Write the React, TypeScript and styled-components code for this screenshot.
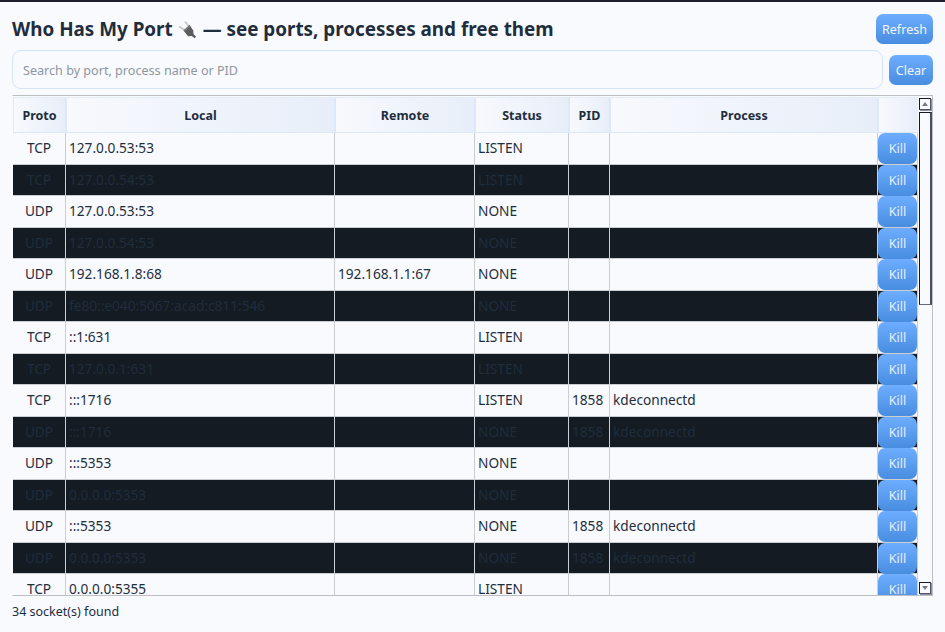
import React from "react";
import styled, { createGlobalStyle } from "styled-components";

const GlobalStyle = createGlobalStyle`
  *, *::before, *::after { box-sizing: border-box; }
  body {
    margin: 0;
    overflow: hidden;
    background: #f8fafe;
    color: #1f2d3d;
    font-family: "Noto Sans", sans-serif;
  }
`;

const COLUMNS = "53px 269px 140px 94px 41px 268px 40px";

const Window = styled.main`
  height: 632px;
  padding: 12px 12px 0;
  border-top: 2px solid #1d1e2e;
  display: flex;
  flex-direction: column;
`;

const TitleBar = styled.header`
  height: 30px;
  display: flex;
  align-items: center;
  justify-content: space-between;
`;

const Title = styled.h1`
  margin: 0;
  display: flex;
  align-items: center;
  font-size: 18.85px;
  line-height: 30px;
  font-weight: 700;
  white-space: pre;
`;

const PlugIcon = styled.svg`
  width: 20px;
  height: 20px;
  margin: 2px 6px 0 4px;
`;

const Button = styled.button<{ $width: number }>`
  width: ${(p) => p.$width}px;
  height: 30px;
  flex: none;
  padding: 0;
  border: 0;
  border-radius: 7px;
  background: linear-gradient(#6eadff, #488de0);
  color: #f1f6fe;
  font: 12.6px/31px "Noto Sans", sans-serif;
`;

const KillButton = styled(Button)`
  height: 31px;
  line-height: 31px;
  color: #e6effc;
`;

const SearchRow = styled.div`
  height: 39px;
  margin-top: 6px;
  display: flex;
  align-items: center;
  gap: 6px;
`;

const SearchInput = styled.input`
  flex: 1;
  height: 39px;
  padding: 1px 10px 0;
  border: 1px solid #d6e4fa;
  border-radius: 9px;
  background: #f8fafe;
  color: #1f2d3d;
  font: 12.6px "Noto Sans", sans-serif;
  outline: 0;
  &::placeholder { color: #8f969e; opacity: 1; }
`;

const TableFrame = styled.section`
  width: 921px;
  height: 501px;
  margin-top: 6px;
  padding-top: 1px;
  border: 1px solid #bcbfc5;
  border-left-color: #f8fafe;
  display: flex;
  overflow: hidden;
`;

const Table = styled.div`
  width: 905px;
`;

const HeaderRow = styled.div`
  display: grid;
  grid-template-columns: 54px 269px 140px 94px 41px 268px 39px;
  height: 36px;
  border-top: 1px solid #e3ecf9;
  border-bottom: 1px solid #dce7f8;
`;

const HeaderCell = styled.div`
  display: flex;
  align-items: center;
  justify-content: center;
  border-right: 2px solid #dde8f8;
  background: linear-gradient(90deg, #f7f9fd, #e8eef9);
  font-size: 12.5px;
  font-weight: 700;
  &:first-child { border-left: 1px solid #e0e9f8; }
  &:last-child { border-right: 0; }
`;

const Row = styled.div<{ $dark: boolean }>`
  display: grid;
  grid-template-columns: ${COLUMNS};
  height: ${(p) => (p.$dark ? 31 : 32)}px;
  border-bottom: 1px solid #cacdd2;
  background: ${(p) => (p.$dark ? "#141b22" : "#f8fafe")};
`;

const Cell = styled.div<{ $center?: boolean }>`
  border-right: 1px solid #cacdd2;
  padding: ${(p) => (p.$center ? "0" : "0 3px")};
  text-align: ${(p) => (p.$center ? "center" : "left")};
  font-size: 13.67px;
  line-height: 30px;
  white-space: nowrap;
`;

const ActionCell = styled.div`
  display: flex;
  border-right: 1px solid #cacdd2;
`;

const ScrollBar = styled.div`
  width: 14px;
  padding: 1px 1px 1px;
  display: flex;
  flex-direction: column;
`;

const ScrollArrow = styled.div`
  width: 12px;
  height: 12px;
  flex: none;
  border: 1px solid #151724;
  border-right-color: #53556d;
  border-bottom-color: #53556d;
  box-shadow: 1px 1px 0 #8d9096;
  display: flex;
  align-items: center;
  justify-content: center;
  svg { display: block; }
`;

const ScrollThumb = styled.div`
  width: 13px;
  height: 193px;
  margin-top: 2px;
  border: solid #151724;
  border-width: 1px 2px 1px 1px;
  border-right-color: #4b4d65;
  border-bottom-color: #66687a;
`;

const ScrollTrack = styled.div`
  flex: 1;
`;

const Status = styled.footer`
  margin-top: 6px;
  font-size: 12.5px;
  line-height: 20px;
`;

type Socket = [proto: string, local: string, remote: string, status: string, pid: string, process: string];

const SOCKETS: Socket[] = [
  ["TCP", "127.0.0.53:53", "", "LISTEN", "", ""],
  ["TCP", "127.0.0.54:53", "", "LISTEN", "", ""],
  ["UDP", "127.0.0.53:53", "", "NONE", "", ""],
  ["UDP", "127.0.0.54:53", "", "NONE", "", ""],
  ["UDP", "192.168.1.8:68", "192.168.1.1:67", "NONE", "", ""],
  ["UDP", "fe80::e040:5067:acad:c811:546", "", "NONE", "", ""],
  ["TCP", "::1:631", "", "LISTEN", "", ""],
  ["TCP", "127.0.0.1:631", "", "LISTEN", "", ""],
  ["TCP", ":::1716", "", "LISTEN", "1858", "kdeconnectd"],
  ["UDP", ":::1716", "", "NONE", "1858", "kdeconnectd"],
  ["UDP", ":::5353", "", "NONE", "", ""],
  ["UDP", "0.0.0.0:5353", "", "NONE", "", ""],
  ["UDP", ":::5353", "", "NONE", "1858", "kdeconnectd"],
  ["UDP", "0.0.0.0:5353", "", "NONE", "1858", "kdeconnectd"],
  ["TCP", "0.0.0.0:5355", "", "LISTEN", "", ""],
];

const HEADERS = ["Proto", "Local", "Remote", "Status", "PID", "Process", ""];

export default function App() {
  return (
    <>
      <GlobalStyle />
      <Window>
        <TitleBar>
          <Title>
            Who Has My Port
            <PlugIcon viewBox="0 0 20 20" aria-hidden="true">
              <path d="M2 6.5 7.5 10M8 1.5l4 5" stroke="#c4c6c8" strokeWidth="1.8" />
              <path d="M6.5 10.5 12.5 5l3.8 5.6.2 3.3 2.5 2.5-1.3 1.8-3-2.2-3.6.2z" fill="#5c5c5c" />
              <path d="m6.5 10.5 6-5.5 1 1.5-6 5.4z" fill="#777" />
            </PlugIcon>
            — see ports, processes and free them
          </Title>
          <Button $width={57}>Refresh</Button>
        </TitleBar>
        <SearchRow>
          <SearchInput placeholder="Search by port, process name or PID" />
          <Button $width={44}>Clear</Button>
        </SearchRow>
        <TableFrame>
          <Table>
            <HeaderRow>
              {HEADERS.map((h, i) => (
                <HeaderCell key={i}>{h}</HeaderCell>
              ))}
            </HeaderRow>
            {SOCKETS.map(([proto, local, remote, status, pid, process], i) => (
              <Row key={i} $dark={i % 2 === 1}>
                <Cell $center>{proto}</Cell>
                <Cell>{local}</Cell>
                <Cell>{remote}</Cell>
                <Cell>{status}</Cell>
                <Cell>{pid}</Cell>
                <Cell>{process}</Cell>
                <ActionCell>
                  <KillButton $width={39}>Kill</KillButton>
                </ActionCell>
              </Row>
            ))}
          </Table>
          <ScrollBar>
            <ScrollArrow>
              <svg width="6" height="4" viewBox="0 0 6 4"><path d="M0 4 3 0l3 4z" fill="#777a80" /></svg>
            </ScrollArrow>
            <ScrollThumb />
            <ScrollTrack />
            <ScrollArrow>
              <svg width="6" height="4" viewBox="0 0 6 4"><path d="M0 0h6L3 4z" fill="#777a80" /></svg>
            </ScrollArrow>
          </ScrollBar>
        </TableFrame>
        <Status>34 socket(s) found</Status>
      </Window>
    </>
  );
}
